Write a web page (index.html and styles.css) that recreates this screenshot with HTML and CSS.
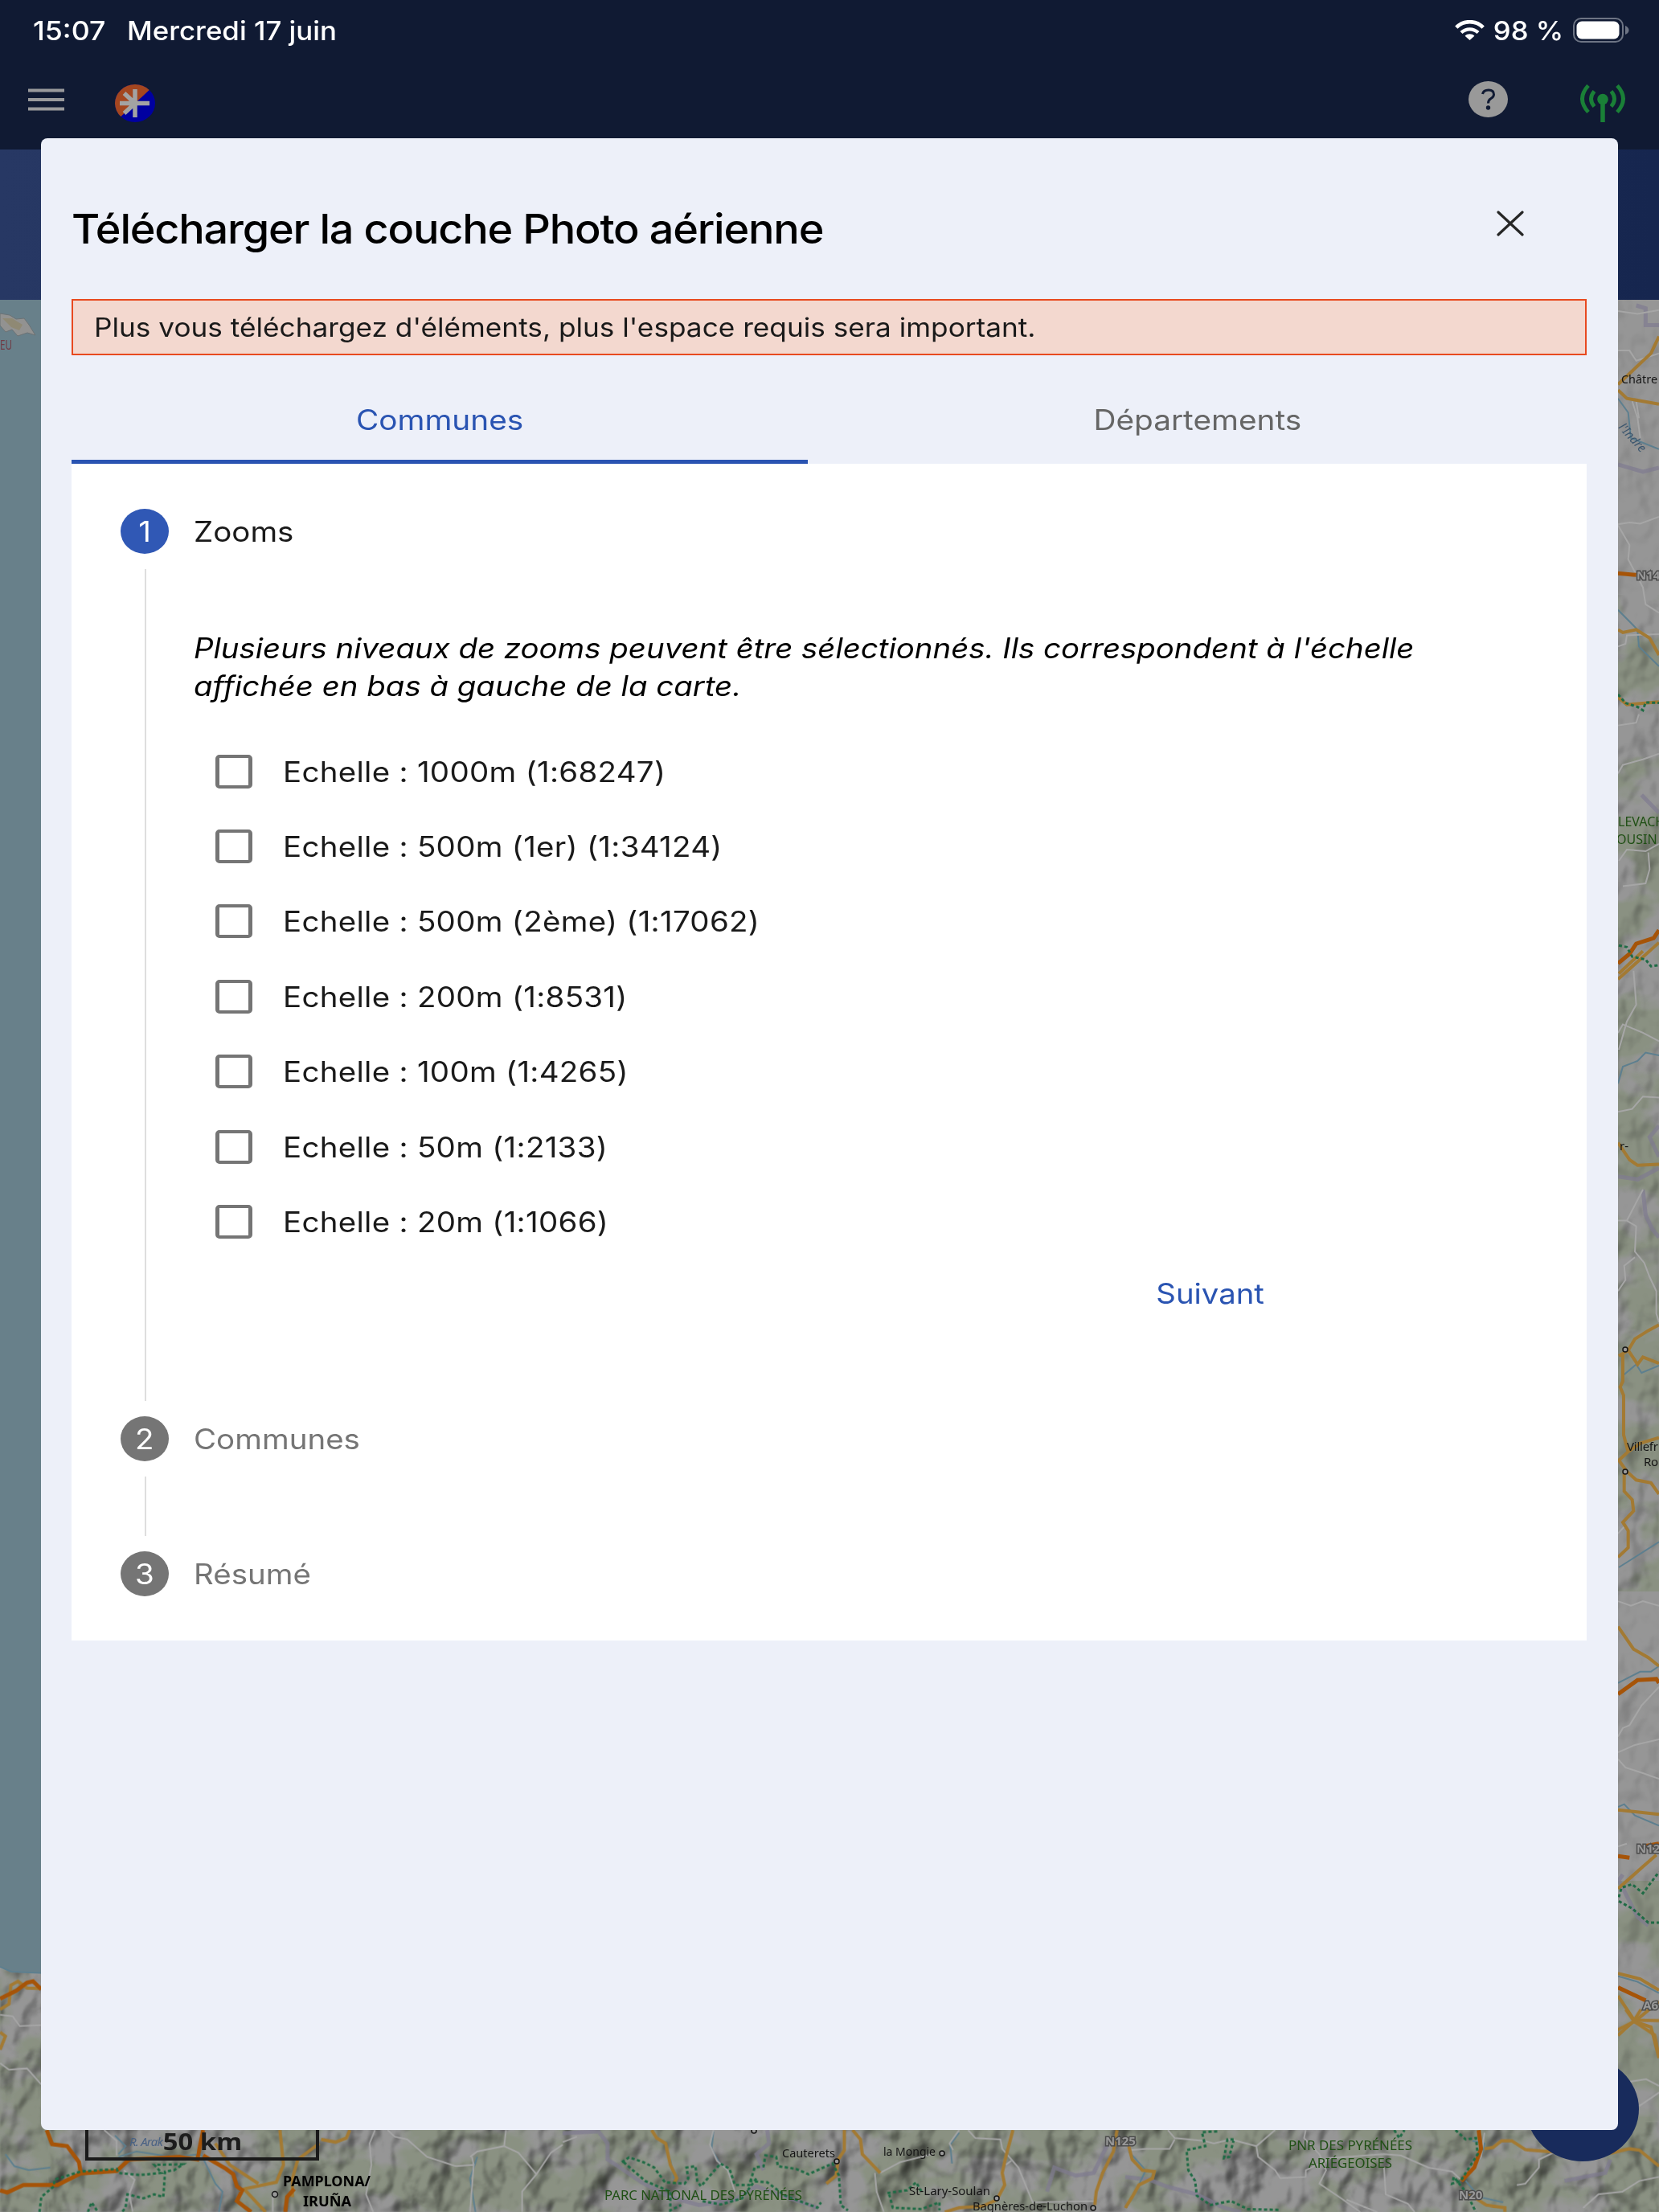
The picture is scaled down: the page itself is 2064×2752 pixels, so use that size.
FILE: index.html
```html
<!DOCTYPE html>
<html lang="fr">
<head>
    <meta charset="UTF-8">
    <meta name="viewport" content="width=device-width, initial-scale=1.0">
    <title>Télécharger la couche</title>
    <link rel="stylesheet" href="styles.css">
</head>
<body>
    <svg class="map" viewBox="0 0 2064 2752" fill="none">
        <defs>
            <filter id="relief" x="0" y="0" width="100%" height="100%" color-interpolation-filters="sRGB">
                <feTurbulence type="fractalNoise" baseFrequency="0.022 0.016" numOctaves="3" seed="7"/>
                <feColorMatrix values="0 0 0 0 0  0 0 0 0 0  0 0 0 0 0  1.2 0 0 0 0"/>
                <feDiffuseLighting surfaceScale="15" diffuseConstant="1.15" lighting-color="#ffffff">
                    <feDistantLight azimuth="225" elevation="60"/>
                </feDiffuseLighting>
                <feGaussianBlur stdDeviation="1"/>
            </filter>
            <filter id="forest" x="0" y="0" width="100%" height="100%" color-interpolation-filters="sRGB">
                <feTurbulence type="fractalNoise" baseFrequency="0.012 0.016" numOctaves="4" seed="12"/>
                <feColorMatrix values="0 0 0 0 0.54  0 0 0 0 0.57  0 0 0 0 0.51  7 0 0 0 -2.9"/>
            </filter>
        </defs>
        <rect width="2064" height="2752" fill="#969696"/>
        <g>
            <rect x="0" y="2450" width="60" height="302" filter="url(#forest)"/>
            <rect x="60" y="2640" width="2004" height="112" filter="url(#forest)"/>
            <rect x="2000" y="740" width="64" height="1240" filter="url(#forest)"/>
            <rect x="2000" y="2340" width="64" height="300" filter="url(#forest)"/>
        </g>
        <g class="relief">
            <rect x="0" y="2450" width="60" height="302" filter="url(#relief)" opacity=".6"/>
            <rect x="60" y="2640" width="2004" height="112" filter="url(#relief)" opacity=".7"/>
            <rect x="2000" y="370" width="64" height="370" filter="url(#relief)" opacity=".15"/>
            <rect x="2000" y="740" width="64" height="1240" filter="url(#relief)" opacity=".35"/>
            <rect x="2000" y="1980" width="64" height="660" filter="url(#relief)" opacity=".2"/>
        </g>

        <!-- ocean and island -->
        <path d="M0 373H60V2455L14 2453L0 2447Z" fill="#68808a"/>
        <path d="M0 2447L14 2453L60 2455" class="river"/>
        <path d="M0 390L12 392L20 397L30 396L36 404L44 417L34 414L22 418L15 410L7 413L0 405Z" fill="#929291" stroke="#6b7275"/>
        <path d="M3 396L15 396L28 404L24 411L14 407Z" fill="#8f8974"/>

        <!-- west coast and Pamplona -->
        <g transform="translate(0 2400) scale(.4464 .3333)">
            <path class="river" d="M15 840L40 885L80 900L140 890M330 850L380 830L480 850L560 840L600 950L620 980L610 1056M1330 850L1310 930L1325 1056M330 840L350 810L320 770"/>
            <path class="road" d="M0 320L35 325L55 362L115 358M0 500L25 525L75 520L115 580M290 750L325 790L325 845M1080 750L1100 775L1135 785L1190 850L1270 885L1320 880L1310 1056M1045 750L1030 800L1035 880L1020 990L1040 1056M1310 850L1330 830L1405 810L1410 750M1405 810L1445 835L1495 915L1535 835L1568 805M1495 915L1455 980L1455 1056M1320 880L1315 850M345 900L375 935L360 990L370 1056M760 1056V995"/>
            <path class="secondary" d="M0 300L25 280L30 210L50 195L75 220L110 222M0 385L15 400L0 450M780 750L790 880L770 945L680 970L740 1056M600 800L640 880L720 950M975 750L965 780L935 795L895 785M890 800L830 860L815 930V1000"/>
            <path class="primary" d="M0 260L45 230L75 200L92 195L115 225M130 750L145 803L187 810L220 870L225 912L325 903L360 860L500 850L550 860L566 750M0 975L20 983L65 955L160 955L225 912M566 845L630 895L650 915L660 960L675 975L660 1015L700 1056M820 970L800 1000L795 1056"/>
            <path class="park" d="M110 1056L115 1000L150 960L152 935L225 905L325 895L330 910L390 918L450 910L430 880L510 878L485 900L460 905L455 1000L430 990L400 1005L355 990L350 1040L340 1056M245 1056L255 1020L270 1050"/>
        </g>

        <!-- Pyrenees -->
        <g transform="translate(700 2600) scale(.4464 .3333)">
            <path class="border" d="M0 162L100 155L125 200V260L160 290L220 345L300 400L380 430L480 410L540 360L600 390L710 440M560 300L540 240L575 200L570 150M1350 380L1370 290L1430 320L1480 310L1520 200"/>
            <path class="river" d="M420 155L415 220L440 280M300 260L310 330M1105 160L1080 205L1085 275"/>
            <path class="road" d="M0 195L40 175M420 150L410 205L430 265L460 300L480 380M885 310L940 270L1030 240M1105 150L1078 200L1088 225M1130 150L1150 180L1220 185L1225 220L1270 290L1310 420L1480 415M870 310L875 380L895 456M1235 280L1250 265"/>
            <path class="secondary" d="M248 150L262 180L287 200L300 280L318 330L310 350M785 150V225L768 260L762 320L735 350M808 150L830 185L835 240L885 310M1255 150L1235 250L1225 310L1232 355L1210 410L1170 435L1105 440L1065 456M1545 150L1535 230L1505 310L1487 380L1483 430"/>
            <path class="park" d="M165 270L185 252L225 270L255 290L285 345L340 350L350 330L345 290L370 285L375 340L385 360L440 275L465 295L480 355L520 355L535 290L560 285L565 245L595 250L600 285L650 295L685 315L735 285L752 275L770 320L775 430L795 450M170 270L230 340L300 380L300 450L330 430M520 340L570 345L620 395L710 440L720 420M905 385L960 375L985 345L1000 380M910 390L920 440L1000 445L1050 420V450M390 415L440 428L500 405L540 330"/>
        </g>
        <g transform="translate(1400 2500) scale(.4235 .3333)">
            <path class="border" d="M0 625L70 635L120 660L210 690L290 740L340 756M1290 640L1410 610L1425 560"/>
            <path class="river" d="M1020 490L1055 500L1045 550M1000 640L1040 700L1110 720M10 530L60 600L30 680"/>
            <path class="road" d="M125 450L145 480L230 490L260 500L310 485L355 500L385 510L440 450M15 525L60 520L130 520L145 485M385 510L390 550L440 600L455 630L530 625V600L580 570L600 555L760 540L810 545L890 590L960 605L990 640L1045 550L1055 460M530 450L525 480L570 540L590 600L570 650L640 710L690 756M760 590L765 690L830 725L850 756M1150 655L1175 650L1215 590V560L1265 530M1345 740L1390 690L1460 680L1510 640L1568 625M1480 270L1530 260L1568 285M1510 360L1568 310M650 710L740 756"/>
            <path class="secondary" d="M10 510L20 560L50 600L85 605L80 630L40 655L20 700L0 740M1055 520L1080 515L1105 490H1135L1175 523L1240 530L1430 535L1480 520L1510 525L1568 585M1440 80L1495 45L1470 0M1515 0L1495 40L1568 42M1495 45L1555 95L1568 180M1000 680L1060 730L1115 740V756"/>
            <path class="primary" d="M1038 450L1045 520L1025 590L987 640"/>
            <path class="park" d="M270 455L225 458L235 510L180 525L185 600L205 640L210 695L250 730L310 715L360 745L450 748M318 485L300 485L290 555L305 550L318 490M790 450L805 480L820 450M970 450L1000 485L1030 480L1035 540L985 640L960 650L965 625L1000 680L1030 756"/>
        </g>

        <!-- east side -->
        <g transform="translate(1964 380) scale(.3333 .7015)">
            <path class="border" d="M215 0L250 5V35H300M147 282L240 295L300 288M235 868L300 900M300 1455L265 1475L300 1510M147 1545L220 1550L300 1530"/>
            <path class="river" d="M147 165L185 190L195 235L300 255M147 540L220 575L225 605L300 640M147 1380L165 1350L220 1340L250 1325L300 1330"/>
            <path class="road" d="M147 80H190L215 98L300 85M147 10L220 15L300 8M200 170L220 200L230 235M215 170L225 200M147 388L190 385L230 387L300 375M147 390L190 425L185 450L240 500L250 530L300 545M147 605L175 600L180 585L300 583M147 745L215 740L225 725M147 830L165 815L240 805L300 795M150 985L180 965L250 968L300 955M165 1030L250 1025L265 1000L260 970M205 1180L215 1240L180 1270L150 1320M147 1290L165 1275L240 1290L300 1305M147 1430L200 1425L240 1403L300 1405"/>
            <path class="secondary" d="M300 55L270 85L147 140M147 150L180 165L240 170L300 175M147 575L165 580L215 575L265 590L300 620M147 695L180 708L300 703M147 1195L300 1130M150 1185L240 1145M147 1485L190 1515L220 1525L300 1523"/>
            <path class="primary" d="M147 475L215 478M300 480H295M147 1167L190 1150L215 1132L280 1122L300 1108"/>
            <path class="park" d="M147 690L175 705L220 712L240 718L250 704L300 705M150 1135L180 1138L200 1155L250 1160L270 1172L300 1170"/>
        </g>
        <g transform="translate(1964 1480) scale(.3333 .7015)">
            <path class="border" d="M240 0L250 45L275 70L300 85M165 1215L150 1225L220 1290L260 1305"/>
            <path class="river" d="M165 330L215 310L235 325L300 312M150 670L200 655L300 625M147 875L230 855H270L300 845M147 1095L170 1090L210 1110L300 1128M147 1395L220 1405L300 1425"/>
            <path class="road" d="M240 0L180 55L147 55M180 55L215 65L210 110L245 130L265 155L290 180V220L300 235M210 120L170 135L175 160L147 180M147 730L195 738L240 730L300 738M147 970L165 955L190 950L235 915L300 882M147 998L210 985L300 975M147 1010L175 1025L240 1035L300 1045M147 610L170 598M147 1165L180 1160"/>
            <path class="secondary" d="M300 240L260 250L210 265L185 285L150 295M185 285L220 310L240 297L300 308M165 290V340L155 350L168 365V435L185 465L150 480L180 500L215 515L270 520L300 540M170 500V535L200 550L205 570L165 590L185 605V635L147 652M185 465L230 450L300 440M147 775L205 815L260 830L300 845M147 1100L300 1108M147 1240L230 1205L290 1180M147 1390L230 1400L300 1420M147 1430L210 1475L300 1440M147 1500L205 1475L270 1485L300 1540"/>
            <path class="primary" d="M147 895L220 870L290 868L300 875M147 1182L190 1185M240 1165L300 1160M147 1415L250 1438"/>
            <path class="park" d="M150 1255L160 1238L200 1232L240 1248L300 1210M150 1262L200 1275L260 1300L300 1300"/>
        </g>

        <g class="towns">
            <circle cx="342" cy="2730" r="3.5"/><circle cx="938" cy="2651" r="3"/><circle cx="1041" cy="2689" r="3"/>
            <circle cx="1172" cy="2679" r="3"/><circle cx="1240" cy="2735" r="3"/><circle cx="1360" cy="2747" r="3"/>
            <circle cx="2022" cy="1679" r="3"/><circle cx="2022" cy="1831" r="3"/>
        </g>

        <g class="labels">
            <text x="0" y="435" font-size="16" fill="#703c46" textLength="15" lengthAdjust="spacingAndGlyphs">EU</text>
            <text x="2017" y="477" font-size="15" textLength="45" lengthAdjust="spacingAndGlyphs">Châtre</text>
            <text x="2013" y="532" font-size="15" fill="#3c566e" font-style="italic" transform="rotate(48 2013 532)">l'Indre</text>
            <text x="2036" y="721" class="shield">N145</text>
            <text x="2013" y="1028" class="park-name">LEVACH</text>
            <text x="2011" y="1050" class="park-name">OUSIN</text>
            <text x="2015" y="1431" font-size="15">r-</text>
            <text x="2024" y="1805" font-size="15" textLength="39">Villefr</text>
            <text x="2045" y="1824" font-size="15" textLength="18">Ro</text>
            <text x="2036" y="2305" class="shield">N126</text>
            <text x="2044" y="2500" class="shield">A6</text>
            <text x="161" y="2670" font-size="15" fill="#4a6283" font-style="italic" textLength="42">R. Arak</text>
            <text x="352" y="2720" class="city" textLength="109" lengthAdjust="spacingAndGlyphs">PAMPLONA/</text>
            <text x="377" y="2745" class="city" textLength="60" lengthAdjust="spacingAndGlyphs">IRUÑA</text>
            <text x="973" y="2684" font-size="15" textLength="66" lengthAdjust="spacingAndGlyphs">Cauterets</text>
            <text x="1099" y="2682" font-size="15" textLength="65" lengthAdjust="spacingAndGlyphs">la Mongie</text>
            <text x="1131" y="2731" font-size="15" textLength="101" lengthAdjust="spacingAndGlyphs">St-Lary-Soulan</text>
            <text x="1210" y="2750" font-size="15" textLength="143" lengthAdjust="spacingAndGlyphs">Bagnères-de-Luchon</text>
            <text x="752" y="2737" class="park-name" textLength="246" lengthAdjust="spacingAndGlyphs">PARC NATIONAL DES PYRÉNÉES</text>
            <text x="1603" y="2675" class="park-name" textLength="154" lengthAdjust="spacingAndGlyphs">PNR DES PYRÉNÉES</text>
            <text x="1628" y="2697" class="park-name" textLength="104" lengthAdjust="spacingAndGlyphs">ARIÉGEOISES</text>
            <text x="1375" y="2669" class="shield">N125</text>
            <text x="1815" y="2736" class="shield">N20</text>
        </g>
    </svg>

    <div class="scale-line"><span>50 km</span></div>
    <div class="fab"></div>

    <header class="app-bar">
        <div class="status-bar">
            <div class="status-left">
                <span class="status-time">15:07</span>
                <span class="status-date">Mercredi 17 juin</span>
            </div>
            <div class="status-right">
                <svg class="wifi" viewBox="0 0 37 25">
                    <path d="M1.8 9.200C11-.2 26-.2 35.200 9.200" fill="none" stroke="#fff" stroke-width="4.600"/>
                    <path d="M8 15.500C14 10 23 10 29 15.500" fill="none" stroke="#fff" stroke-width="4.400"/>
                    <path d="M18.500 25L12.600 19.700C16 16.500 21 16.500 24.400 19.700Z" fill="#fff"/>
                </svg>
                <span class="battery-level">98 %</span>
                <svg class="battery" viewBox="0 0 70 31">
                    <rect x="1" y="1" width="61" height="29" rx="9" fill="none" stroke="#6d7484" stroke-width="2"/>
                    <rect x="4.500" y="4.500" width="53" height="22" rx="6.500" fill="#fff"/>
                    <path d="M65 10Q69.500 12 69.500 15.500Q69.500 19 65 21Z" fill="#6d7484"/>
                </svg>
            </div>
        </div>
        <div class="toolbar">
            <svg class="menu-icon" viewBox="0 0 45 28">
                <path d="M0 2.500H45M0 14H45M0 25.500H45" stroke="#9a9a9c" stroke-width="4"/>
            </svg>
            <svg class="logo" viewBox="0 0 50 47">
                <ellipse cx="25" cy="23.500" rx="25" ry="23.500" fill="#0000a0"/>
                <path d="M42.680 6.880A25 23.500 0 0 0 7.320 40.120Z" fill="#a4461f"/>
                <path d="M25 6V41M6 23.500H43M25 23.500L11.500 11M25 23.500L11.500 36" stroke="#a3a3a3" stroke-width="5.500"/>
            </svg>
            <div class="toolbar-actions">
                <svg class="help-icon" viewBox="0 0 49 45">
                    <ellipse cx="24.500" cy="22.500" rx="24.500" ry="22.500" fill="#999"/>
                    <path d="M17.500 16Q18.500 11 25 11Q31.500 11 31.500 16.500Q31.500 19.500 28 21.500Q24.500 23.500 24.500 27.500" fill="none" stroke="#101a33" stroke-width="3"/>
                    <circle cx="24.500" cy="33" r="2.700" fill="#101a33"/>
                </svg>
                <svg class="signal-icon" viewBox="0 0 56 48">
                    <g fill="none" stroke="#1a8037" stroke-width="4.800">
                        <path d="M10 1.500Q-5 18 10 34.500M46 1.500Q61 18 46 34.500"/>
                        <path d="M17.500 8.500Q9.500 18 17.500 27.500M38.500 8.500Q46.500 18 38.500 27.500"/>
                        <path d="M28 18V47" stroke-width="5.500"/>
                    </g>
                    <circle cx="28" cy="18.500" r="6.800" fill="#1a8037"/>
                </svg>
            </div>
        </div>
    </header>
    <div class="sub-bar"></div>

    <main class="modal">
        <div class="modal-header">
            <h1 class="modal-title">Télécharger la couche Photo aérienne</h1>
            <svg class="close-icon" viewBox="0 0 34 32">
                <path d="M2 2L32 30M32 2L2 30" stroke="#262626" stroke-width="3.200" stroke-linecap="round"/>
            </svg>
        </div>

        <div class="alert"><span class="wide">Plus vous téléchargez d'éléments, plus l'espace requis sera important.</span></div>

        <div class="tabs">
            <div class="tab active"><span>Communes</span></div>
            <div class="tab"><span>Départements</span></div>
        </div>

        <div class="panel">
            <section class="step step-active">
                <div class="rail">
                    <span class="step-number"><span>1</span></span>
                    <span class="rail-line"></span>
                </div>
                <div class="step-body">
                    <h2 class="step-title wide">Zooms</h2>
                    <p class="hint wide">Plusieurs niveaux de zooms peuvent être sélectionnés. Ils correspondent à l'échelle affichée en bas à gauche de la carte.</p>
                    <ul class="scales">
                        <li><span class="checkbox"></span><span class="wide">Echelle : 1000m (1:68247)</span></li>
                        <li><span class="checkbox"></span><span class="wide">Echelle : 500m (1er) (1:34124)</span></li>
                        <li><span class="checkbox"></span><span class="wide">Echelle : 500m (2ème) (1:17062)</span></li>
                        <li><span class="checkbox"></span><span class="wide">Echelle : 200m (1:8531)</span></li>
                        <li><span class="checkbox"></span><span class="wide">Echelle : 100m (1:4265)</span></li>
                        <li><span class="checkbox"></span><span class="wide">Echelle : 50m (1:2133)</span></li>
                        <li><span class="checkbox"></span><span class="wide">Echelle : 20m (1:1066)</span></li>
                    </ul>
                    <div class="step-actions">
                        <a class="next">Suivant</a>
                    </div>
                </div>
            </section>
            <section class="step step-small">
                <div class="rail">
                    <span class="step-number"><span>2</span></span>
                    <span class="rail-line"></span>
                </div>
                <h2 class="step-title wide">Communes</h2>
            </section>
            <section class="step">
                <div class="rail">
                    <span class="step-number"><span>3</span></span>
                </div>
                <h2 class="step-title wide">Résumé</h2>
            </section>
        </div>
    </main>
</body>
</html>
```

FILE: styles.css
```css
* {
    margin: 0;
    padding: 0;
    box-sizing: border-box;
}

body {
    position: relative;
    width: 2064px;
    height: 2752px;
    overflow: hidden;
    font-family: Inter, 'Liberation Sans', sans-serif;
    font-size: 35px;
    color: #1a1a1a;
}

/* Slightly extended lettering */
.wide {
    display: inline-block;
    transform: scaleX(1.1);
    transform-origin: left center;
}

/* Map */
.map {
    position: absolute;
    inset: 0;
    width: 2064px;
    height: 2752px;
}

.map path {
    vector-effect: non-scaling-stroke;
}

.relief {
    mix-blend-mode: multiply;
}

.river {
    stroke: #5d7f8f;
    stroke-width: 2;
}

.road {
    stroke: #a6a6a6;
    stroke-width: 2;
}

.secondary {
    stroke: #a37a33;
    stroke-width: 4;
}

.primary {
    stroke: #a65408;
    stroke-width: 5;
}

.border {
    stroke: #7f7b91;
    stroke-width: 5;
    opacity: 0.7;
}

.park {
    stroke: #1f6b45;
    stroke-width: 3;
    stroke-dasharray: 4 3;
}

.towns {
    stroke: #161616;
    stroke-width: 1.5;
    fill: #999;
}

.labels {
    font-family: 'Noto Sans', sans-serif;
    fill: #151515;
}

.labels .city {
    font-size: 17px;
    font-weight: 700;
    fill: #000;
}

.labels .park-name {
    font-size: 16px;
    fill: #1f4f14;
}

.labels .shield {
    font-size: 15px;
    font-weight: 700;
    fill: #999;
    stroke: #4c4c4c;
    stroke-width: 3;
    paint-order: stroke;
}

.scale-line {
    position: absolute;
    left: 106px;
    top: 2630px;
    width: 291px;
    height: 58px;
    border: 4px solid #1a1a1a;
    border-top: none;
    font: 700 28px/69px 'Noto Sans', sans-serif;
    text-align: center;
    color: #1c1c1c;
}

.scale-line span {
    display: inline-block;
    transform: scaleX(1.17);
}

.fab {
    position: absolute;
    left: 1899px;
    top: 2559px;
    width: 140px;
    height: 130px;
    border-radius: 50%;
    background: #182b5c;
}

/* Top bars */
.app-bar {
    position: relative;
    height: 186px;
    background: #101a33;
}

.status-bar {
    display: flex;
    justify-content: space-between;
    align-items: center;
    height: 75px;
    padding: 0 37px 0 41px;
    color: #fff;
    font-size: 33px;
    font-weight: 500;
}

.status-left,
.status-right {
    display: flex;
    align-items: center;
}

.status-left {
    gap: 33px;
}

.status-time {
    transform: scaleX(1.08);
    transform-origin: left center;
}

.status-date {
    transform: scaleX(1.055);
    transform-origin: left center;
}

.battery-level {
    transform: scaleX(1.05);
    transform-origin: right center;
}

.wifi {
    width: 37px;
    height: 25px;
    margin-right: 15px;
}

.battery {
    width: 70px;
    height: 31px;
    margin-left: 12px;
}

.toolbar {
    display: flex;
    padding: 25px 42px 0 35px;
}

.menu-icon {
    width: 45px;
    height: 28px;
    margin-top: 10px;
}

.logo {
    width: 50px;
    height: 47px;
    margin: 5px 0 0 63px;
}

.toolbar-actions {
    display: flex;
    gap: 90px;
    margin-left: auto;
}

.help-icon {
    width: 49px;
    height: 45px;
    margin-top: 1px;
}

.signal-icon {
    width: 56px;
    height: 48px;
    margin-top: 5px;
}

.sub-bar {
    position: relative;
    height: 187px;
    background: linear-gradient(90deg, #273864, #16264f);
}

/* Modal */
.modal {
    position: absolute;
    left: 51px;
    top: 172px;
    width: 1962px;
    height: 2478px;
    padding: 0 39px 0 38px;
    border-radius: 8px;
    background: #edf0f9;
}

.modal-header {
    display: flex;
    justify-content: space-between;
    height: 200px;
    padding: 82px 78px 0 0;
}

.modal-title {
    font-size: 51px;
    font-weight: 500;
    line-height: 62px;
    letter-spacing: -1.15px;
    color: #000;
    white-space: nowrap;
    transform: scaleX(1.06);
    transform-origin: left center;
}

.close-icon {
    width: 34px;
    height: 32px;
    margin-top: 8px;
}

.alert {
    height: 70px;
    padding-left: 26px;
    border: 2px solid #e8491f;
    background: #f3d8cf;
    font-size: 32px;
    line-height: 67px;
    white-space: nowrap;
}

.tabs {
    display: grid;
    grid-template-columns: 916px 969px;
    height: 135px;
    padding-top: 28px;
}

.tab {
    line-height: 104px;
    height: 107px;
    text-align: center;
    color: #666;
}

.tab span {
    display: inline-block;
    transform: scaleX(1.107);
}

.tab.active {
    color: #2a54b2;
    border-bottom: 5px solid #2a54b2;
}

.panel {
    height: 1464px;
    padding: 56px 60px 0;
    background: #fff;
}

.step {
    display: flex;
    gap: 31px;
    color: #757575;
}

.step-active {
    height: 1129px;
    color: #1a1a1a;
}

.step-small {
    height: 168px;
}

.rail {
    display: flex;
    flex-direction: column;
    align-items: center;
    gap: 19px;
    width: 61px;
    padding-left: 1px;
    padding-bottom: 19px;
}

.rail-line {
    flex: 1;
    width: 2px;
    margin-left: 2px;
    background: #dedede;
}

.step-number {
    width: 60px;
    height: 56px;
    border-radius: 50%;
    background: #757575;
    color: #fff;
    line-height: 57px;
    text-align: center;
}

.step-number span {
    display: inline-block;
    transform: scaleX(1.1);
}

.step-active .step-number {
    background: #3058b5;
}

.step-title {
    display: block;
    font-size: 35px;
    font-weight: 400;
    line-height: 57px;
    height: 56px;
}

.step-body {
    flex: 1;
}

.hint {
    display: block;
    width: 1425px;
    margin-top: 94px;
    font-style: italic;
    line-height: 47px;
    color: #000;
    transform: scaleX(1.097);
}

.scales {
    margin-top: 36px;
    list-style: none;
}

.scales li {
    display: flex;
    align-items: center;
    gap: 38px;
    height: 93.4px;
    padding-left: 27px;
    letter-spacing: 0.25px;
}

.checkbox {
    width: 46px;
    height: 42px;
    border: solid #757575;
    border-width: 4px 5px;
    border-radius: 5px;
}

.step-actions {
    display: flex;
    justify-content: flex-end;
    padding-right: 341px;
    line-height: 85px;
}

.next {
    color: #2a54b2;
    transform: scaleX(1.095);
    transform-origin: right center;
}
```
